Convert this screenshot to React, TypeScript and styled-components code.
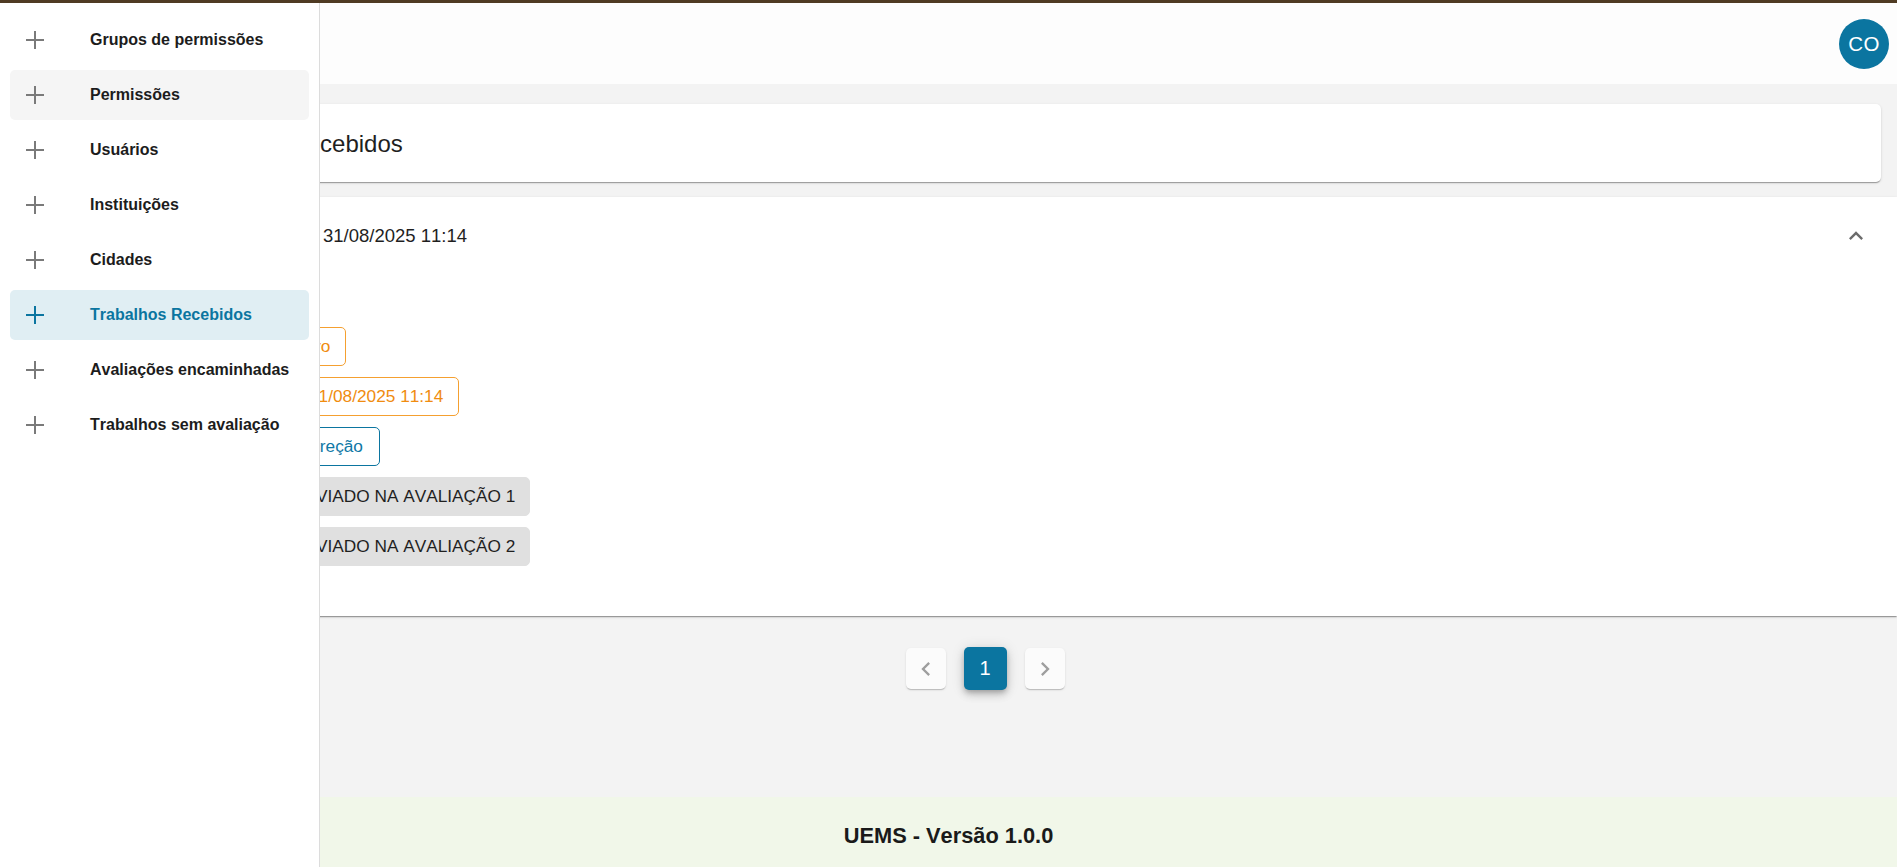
import React from "react";
import styled, { createGlobalStyle, css } from "styled-components";

const GlobalStyle = createGlobalStyle`
  * { box-sizing: border-box; }
  html, body { margin: 0; padding: 0; }
  body {
    font-family: "Liberation Sans", Arial, sans-serif;
    font-kerning: none;
    color: #222;
    background: #ffffff;
  }
`;

const PRIMARY = "#0b75a0";

const Page = styled.div`
  position: relative;
  display: flex;
  flex-direction: column;
  height: 100vh;
  min-height: 867px;
  overflow: hidden;
`;

const TopStripe = styled.div`
  height: 3px;
  flex: none;
  background: #4f3b23;
`;

const AppBar = styled.header`
  height: 81px;
  flex: none;
  display: flex;
  align-items: center;
  justify-content: space-between;
  padding: 0 8px 0 18px;
  background: #fdfdfd;
`;

const IconButton = styled.button`
  width: 46px;
  height: 46px;
  border: none;
  background: transparent;
  color: #555;
  display: flex;
  align-items: center;
  justify-content: center;
  padding: 0;
`;

const Avatar = styled.div`
  width: 50px;
  height: 50px;
  border-radius: 50%;
  background: ${PRIMARY};
  color: #fff;
  font-size: 20.5px;
  display: flex;
  align-items: center;
  justify-content: center;
  letter-spacing: 0.3px;
`;

const Body = styled.div`
  flex: 1;
  display: flex;
  min-height: 0;
`;

const Rail = styled.nav`
  width: 73px;
  flex: none;
  background: #fff;
  border-right: 1px solid #e0e0e0;
`;

const Main = styled.main`
  flex: 1;
  display: flex;
  flex-direction: column;
  background: #f3f3f3;
  padding-top: 20px;
`;

const TitleCard = styled.section`
  margin: 0 16px 15px;
  height: 78px;
  background: #fff;
  border-radius: 5px;
  display: flex;
  align-items: center;
  gap: 25px;
  padding: 1px 0 0 18px;
  box-shadow: 0 2px 1px -1px rgba(0, 0, 0, 0.2), 0 1px 1px 0 rgba(0, 0, 0, 0.14),
    0 1px 3px 0 rgba(0, 0, 0, 0.12);
`;

const TitleIcon = styled.span`
  width: 44px;
  display: flex;
  justify-content: center;
  color: ${PRIMARY};
`;

const Title = styled.h1`
  margin: 0;
  font-size: 24px;
  font-weight: 400;
  color: #1f1f1f;
`;

const Accordion = styled.section`
  background: #fff;
  box-shadow: 0 2px 1px -1px rgba(0, 0, 0, 0.2), 0 1px 1px 0 rgba(0, 0, 0, 0.14),
    0 1px 3px 0 rgba(0, 0, 0, 0.12);
`;

const Summary = styled.div`
  height: 77px;
  display: flex;
  align-items: center;
  padding: 1px 27px 0 18px;
`;

const SummaryLabel = styled.span`
  width: 214px;
  margin-right: 18px;
  font-size: 18.5px;
  color: #555;
  white-space: nowrap;
  overflow: hidden;
`;

const SummaryDate = styled.span`
  flex: 1;
  font-size: 18.5px;
  color: #1f1f1f;
`;

const ExpandIcon = styled.svg`
  width: 28px;
  height: 28px;
  fill: rgba(0, 0, 0, 0.58);
`;

const Details = styled.div`
  display: grid;
  grid-template-columns: 170px auto;
  column-gap: 17px;
  row-gap: 11px;
  justify-items: start;
  align-items: center;
  padding: 53px 18px 50px;
`;

const DetailLabel = styled.span`
  font-size: 17.25px;
  color: #555;
`;

type ChipVariant = "warning" | "info" | "default";

const chipColors: Record<ChipVariant, ReturnType<typeof css>> = {
  warning: css`
    color: #f08c10;
    border-color: #f5a030;
    background: transparent;
    padding-right: 15px;
  `,
  info: css`
    color: #0f78a6;
    border-color: ${PRIMARY};
    background: transparent;
    padding-right: 16px;
  `,
  default: css`
    color: #1f1f1f;
    border-color: #e0e0e0;
    background: #e0e0e0;
    padding-right: 14px;
  `,
};

const Chip = styled.span<{ $variant: ChipVariant; $withIcon?: boolean }>`
  height: 39px;
  display: inline-flex;
  align-items: center;
  gap: 5px;
  border: 1px solid;
  border-radius: 5px;
  padding-left: ${(p) => (p.$withIcon ? "5px" : "13px")};
  font-size: 17.25px;
  white-space: nowrap;
  ${(p) => chipColors[p.$variant]}
`;

const Pagination = styled.nav`
  margin-top: 31px;
  display: flex;
  justify-content: center;
  align-items: center;
  gap: 18px;
`;

const PageButton = styled.button<{ $active?: boolean }>`
  width: ${(p) => (p.$active ? "43px" : "40px")};
  height: ${(p) => (p.$active ? "43px" : "41px")};
  border: none;
  border-radius: 5px;
  padding: 0;
  display: flex;
  align-items: center;
  justify-content: center;
  font-family: inherit;
  font-size: 20px;
  background: ${(p) => (p.$active ? PRIMARY : "#fbfbfb")};
  color: ${(p) => (p.$active ? "#fff" : "#9e9e9e")};
  box-shadow: ${(p) =>
    p.$active
      ? "0 3px 5px -1px rgba(0,0,0,0.2), 0 5px 8px 0 rgba(0,0,0,0.14), 0 1px 14px 0 rgba(0,0,0,0.12)"
      : "0 2px 1px -1px rgba(0,0,0,0.12), 0 1px 1px 0 rgba(0,0,0,0.08), 0 1px 3px 0 rgba(0,0,0,0.08)"};
`;

const Chevron = styled.svg`
  width: 28px;
  height: 28px;
  fill: currentColor;
`;

const Footer = styled.footer`
  height: 70px;
  flex: none;
  background: #f1f7e9;
  display: flex;
  align-items: center;
  justify-content: center;
  padding-top: 8px;
  font-size: 21.8px;
  font-weight: 700;
  color: #1a1a1a;
`;

const Drawer = styled.aside`
  position: absolute;
  top: 3px;
  left: 0;
  bottom: 0;
  width: 320px;
  background: #fff;
  border-right: 1px solid #dcdcdc;
  z-index: 10;
`;

const MenuList = styled.ul`
  list-style: none;
  margin: 0;
  padding: 12px 10px 0;
  display: flex;
  flex-direction: column;
  gap: 5px;
`;

const MenuItem = styled.li<{ $active?: boolean; $hover?: boolean }>`
  height: 50px;
  display: flex;
  align-items: center;
  padding-left: 15px;
  border-radius: 5px;
  font-size: 16px;
  font-weight: 700;
  color: ${(p) => (p.$active ? PRIMARY : "#1c1c1c")};
  background: ${(p) => (p.$active ? "#e0eef3" : p.$hover ? "#f5f5f5" : "transparent")};
`;

const MenuIcon = styled.svg<{ $active?: boolean }>`
  width: 20px;
  height: 20px;
  margin-right: 45px;
  flex: none;
  stroke: ${(p) => (p.$active ? PRIMARY : "#7a7a7a")};
`;

const PlusIcon = ({ active }: { active?: boolean }) => (
  <MenuIcon $active={active} viewBox="0 0 20 20" fill="none">
    <path d="M10 1v18M1 10h18" strokeWidth="2" />
  </MenuIcon>
);

const menu = [
  "Grupos de permissões",
  "Permissões",
  "Usuários",
  "Instituições",
  "Cidades",
  "Trabalhos Recebidos",
  "Avaliações encaminhadas",
  "Trabalhos sem avaliação",
];

export default function App() {
  return (
    <>
      <GlobalStyle />
      <Page>
        <TopStripe />
        <AppBar>
          <IconButton aria-label="menu">
            <svg width="26" height="26" viewBox="0 0 24 24" fill="currentColor">
              <path d="M3 18h18v-2H3v2zm0-5h18v-2H3v2zm0-7v2h18V6H3z" />
            </svg>
          </IconButton>
          <Avatar>CO</Avatar>
        </AppBar>
        <Body>
          <Rail />
          <Main>
            <TitleCard>
              <TitleIcon>
                <svg width="26" height="26" viewBox="0 0 24 24" fill="currentColor">
                  <path d="M19 3H5c-1.1 0-2 .9-2 2v14c0 1.1.9 2 2 2h14c1.1 0 2-.9 2-2V5c0-1.1-.9-2-2-2zm-5 14H7v-2h7v2zm3-4H7v-2h10v2zm0-4H7V7h10v2z" />
                </svg>
              </TitleIcon>
              <Title>Trabalhos Recebidos</Title>
            </TitleCard>
            <Accordion>
              <Summary>
                <SummaryLabel>Trabalho enviado em</SummaryLabel>
                <SummaryDate>31/08/2025 11:14</SummaryDate>
                <ExpandIcon viewBox="0 0 24 24">
                  <path d="M12 8l-6 6 1.41 1.41L12 10.83l4.59 4.58L18 14z" />
                </ExpandIcon>
              </Summary>
              <Details>
                <DetailLabel>Situação:</DetailLabel>
                <Chip $variant="warning">Ativo</Chip>
                <DetailLabel>Enviado em:</DetailLabel>
                <Chip $variant="warning" $withIcon>
                  <svg width="20" height="20" viewBox="0 0 24 24" fill="currentColor">
                    <path d="M11.99 2C6.47 2 2 6.48 2 12s4.47 10 9.99 10C17.52 22 22 17.52 22 12S17.52 2 11.99 2zM12 20c-4.42 0-8-3.58-8-8s3.58-8 8-8 8 3.58 8 8-3.58 8-8 8zm.5-13H11v6l5.25 3.15.75-1.230-4.5-2.67z" />
                  </svg>
                  31/08/2025 11:14
                </Chip>
                <DetailLabel>Etapa:</DetailLabel>
                <Chip $variant="info">Correção</Chip>
                <DetailLabel>Avaliação 1:</DetailLabel>
                <Chip $variant="default">ENVIADO NA AVALIAÇÃO 1</Chip>
                <DetailLabel>Avaliação 2:</DetailLabel>
                <Chip $variant="default">ENVIADO NA AVALIAÇÃO 2</Chip>
              </Details>
            </Accordion>
            <Pagination>
              <PageButton aria-label="anterior">
                <Chevron viewBox="0 0 24 24">
                  <path d="M15.41 7.41 14 6l-6 6 6 6 1.41-1.41L10.83 12z" />
                </Chevron>
              </PageButton>
              <PageButton $active>1</PageButton>
              <PageButton aria-label="próxima">
                <Chevron viewBox="0 0 24 24">
                  <path d="M10 6 8.59 7.41 13.17 12l-4.58 4.59L10 18l6-6z" />
                </Chevron>
              </PageButton>
            </Pagination>
          </Main>
        </Body>
        <Footer>UEMS - Versão 1.0.0</Footer>
        <Drawer>
          <MenuList>
            {menu.map((label) => (
              <MenuItem
                key={label}
                $active={label === "Trabalhos Recebidos"}
                $hover={label === "Permissões"}
              >
                <PlusIcon active={label === "Trabalhos Recebidos"} />
                {label}
              </MenuItem>
            ))}
          </MenuList>
        </Drawer>
      </Page>
    </>
  );
}
